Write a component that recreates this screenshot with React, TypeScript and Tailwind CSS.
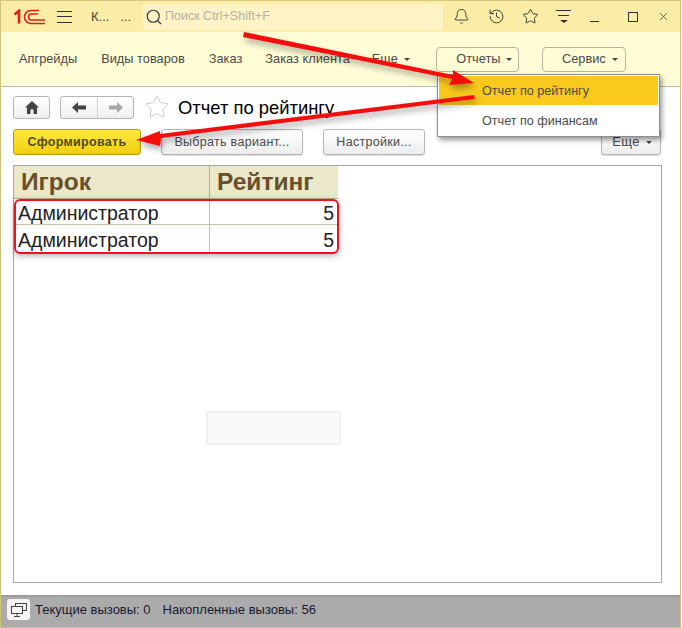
import { Bell, History, Star, X, Search } from 'lucide-react';

const sections = [
  { label: 'Апгрейды', cls: 'ml-[18px]' },
  { label: 'Виды товаров', cls: 'ml-[24px]' },
  { label: 'Заказ', cls: 'ml-[24px]' },
  { label: 'Заказ клиента', cls: 'ml-[23px]' },
];

function Caret() {
  return <span className="ml-[6px] inline-block h-0 w-0 border-x-[3px] border-t-[3px] border-x-transparent border-t-[#444]" />;
}

function Logo() {
  return (
    <svg width="31" height="16" viewBox="0 0 31 16" fill="none" stroke="#e0201b" strokeWidth="1.6">
      <path d="M0.5 5.5 L5 1.8 V14.5" strokeWidth="2.6" />
      <path d="M25 1.5 H17 a6.5 6.5 0 0 0 0 13 H31" />
      <path d="M24 5 H17.5 a3 3 0 0 0 0 6 H31" />
    </svg>
  );
}

function ToolButton({ label, className, caret }: { label: string; className: string; caret?: boolean }) {
  return (
    <div className={`flex h-[26px] items-center justify-center rounded-[3px] border border-[#b5b5b5] bg-gradient-to-b from-white to-[#ededed] text-[12.5px] tracking-[0.3px] text-[#4a4a4a] shadow-[0_1px_1px_rgba(0,0,0,0.15)] ${className}`}>
      {label}
      {caret && <Caret />}
    </div>
  );
}

function Arrows() {
  return (
    <svg className="pointer-events-none absolute left-0 top-0" width="682" height="628">
      <defs>
        <filter id="arrowShadow" x="-10%" y="-30%" width="120%" height="170%">
          <feDropShadow dx="2" dy="4" stdDeviation="3" floodColor="#000" floodOpacity="0.35" />
        </filter>
      </defs>
      <g fill="#f40c0c" filter="url(#arrowShadow)">
        <polygon points="244,32 243,37 452,79 449,85 474,83 453,70 453,75" />
        <polygon points="474,95 475,99 161,138 160,146 136,140 160,131 160,134" />
      </g>
    </svg>
  );
}

export default function App() {
  return (
    <div className="relative flex h-[628px] w-[682px] flex-col overflow-hidden bg-white font-['Liberation_Sans',Arial,sans-serif]">
      <div className="flex h-[628px] w-[681px] flex-col border-x border-b border-[#cfc27a]">
        {/* top bar */}
        <div className="flex h-[32px] shrink-0 items-center border-t border-[#d8ca80] bg-[#fbeda6]">
          <div className="ml-[13px] flex w-[31px] items-center"><Logo /></div>
          <div className="ml-[12px] flex h-[12px] w-[15px] flex-col justify-between">
            <div className="h-[1px] bg-[#333]" />
            <div className="h-[1px] bg-[#333]" />
            <div className="h-[1px] bg-[#333]" />
          </div>
          <div className="ml-[19px] w-[40px] whitespace-pre text-[13px] text-[#444]">К...   ...</div>
          <div className="ml-[12px] flex h-[26px] w-[300px] items-center rounded-[3px] bg-[#fdf3c4]">
            <Search className="ml-[2px] h-[18px] w-[18px] text-[#333]" strokeWidth={1.5} />
            <span className="ml-[2px] text-[12.5px] text-[#b5b0a0]">Поиск Ctrl+Shift+F</span>
          </div>
          <Bell className="ml-[10px] h-[17px] w-[17px] text-[#333]" strokeWidth={1.3} />
          <History className="ml-[18px] h-[17px] w-[17px] text-[#333]" strokeWidth={1.3} />
          <Star className="ml-[17px] h-[17px] w-[17px] text-[#333]" strokeWidth={1.3} />
          <div className="ml-[17px] flex w-[15px] flex-col items-center gap-[4px]">
            <div className="h-[1px] w-[15px] bg-[#333]" />
            <div className="h-[1px] w-[11px] bg-[#333]" />
            <div className="h-0 w-0 border-x-[4px] border-t-[3px] border-x-transparent border-t-[#333]" />
          </div>
          <div className="ml-[19px] mt-[9px] h-[1px] w-[9px] bg-[#333]" />
          <div className="ml-[29px] h-[10px] w-[10px] border border-[#333]" />
          <X className="ml-[19px] h-[13px] w-[13px] text-[#333]" strokeWidth={1.3} />
        </div>

        {/* sections */}
        <div className="flex h-[55px] shrink-0 items-center border-b border-[#b5b5b5] bg-[#fffdd6] text-[12.8px] text-[#4a4a4a]">
          {sections.map((s) => (
            <span key={s.label} className={`${s.cls} whitespace-nowrap`}>{s.label}</span>
          ))}
          <span className="ml-[22px] flex items-center">Еще<Caret /></span>
          <div className="ml-[26px] flex h-[25px] w-[83px] items-center justify-center rounded-[4px] border border-[#b9b59a] pl-[14px]">Отчеты<Caret /></div>
          <div className="ml-[23px] flex h-[25px] w-[84px] items-center justify-center rounded-[4px] border border-[#b9b59a] pl-[12px]">Сервис<Caret /></div>
        </div>

        {/* form */}
        <div className="flex min-h-0 flex-1 flex-col px-[12px] pt-[9px]">
          <div className="flex h-[22px] items-center">
            <div className="flex h-[23px] w-[37px] items-center justify-center rounded-[3px] border border-[#b5b5b5] bg-gradient-to-b from-white to-[#efefef]">
              <svg width="14" height="13" viewBox="0 0 14 13" fill="#444">
                <path d="M7 0 L14 6.5 H12 V13 H8.5 V8.5 H5.5 V13 H2 V6.5 H0 Z" />
              </svg>
            </div>
            <div className="ml-[10px] flex h-[23px] w-[74px] items-center rounded-[3px] border border-[#b5b5b5] bg-gradient-to-b from-white to-[#efefef]">
              <div className="flex h-full w-[37px] items-center justify-center border-r border-[#cfcfcf]">
                <svg width="14" height="11" viewBox="0 0 14 11" fill="#444">
                  <path d="M0 5.5 L6 0 V3.5 H14 V7.5 H6 V11 Z" />
                </svg>
              </div>
              <div className="flex flex-1 items-center justify-center">
                <svg width="14" height="11" viewBox="0 0 14 11" fill="#a8a8a8">
                  <path d="M14 5.5 L8 0 V3.5 H0 V7.5 H8 V11 Z" />
                </svg>
              </div>
            </div>
            <Star className="ml-[10px] h-[26px] w-[26px] text-[#c9c9c9]" strokeWidth={0.9} />
            <span className="ml-[8px] mt-[2px] text-[18.4px] text-black">Отчет по рейтингу</span>
          </div>

          <div className="mt-[11px] flex h-[26px] items-center">
            <div className="flex h-[26px] w-[128px] items-center justify-center rounded-[3px] border border-[#b39b12] bg-gradient-to-b from-[#ffe93c] to-[#f2cf00] text-[12.5px] font-bold tracking-[0.3px] text-[#4f4a20]">
              Сформировать
            </div>
            <ToolButton label="Выбрать вариант..." className="ml-[20px] w-[142px]" />
            <ToolButton label="Настройки..." className="ml-[20px] w-[102px]" />
            <ToolButton label="Еще" caret className="ml-[176px] w-[60px] pl-[2px] text-[13px]" />
          </div>

          {/* report */}
          <div className="relative mt-[10px] h-[418px] w-[649px] border border-[#a5a5a5] bg-white">
            <div className="flex h-[33px] w-[324px] border-b border-[#b8ae92] bg-[#ebe8c9] text-[24.5px] font-bold text-[#6a4f2c]">
              <div className="flex w-[196px] items-center border-r border-[#b8ae92] pl-[7px]">Игрок</div>
              <div className="flex flex-1 items-center pl-[7px]">Рейтинг</div>
            </div>
            <div className="flex h-[26px] w-[324px] border-b border-[#c9c0b0] text-[19.5px] leading-[29px] text-[#222]">
              <div className="w-[196px] border-r border-[#c9c0b0] pl-[4px]">Администратор</div>
              <div className="flex-1 pr-[4px] text-right">5</div>
            </div>
            <div className="flex h-[27px] w-[324px] text-[19.5px] leading-[30px] text-[#222]">
              <div className="w-[196px] border-r border-[#c9c0b0] pl-[4px]">Администратор</div>
              <div className="flex-1 pr-[4px] text-right">5</div>
            </div>
            <div className="absolute left-0 top-[33px] h-[55px] w-[325px] rounded-[6px] border-2 border-[#f01020] shadow-[0_2px_6px_rgba(0,0,0,0.3)]" />
            <div className="absolute left-[192px] top-[245px] h-[34px] w-[135px] border-2 border-[#f1f1f1] bg-[#f9f9f9]" />
          </div>
        </div>

        {/* status */}
        <div className="flex h-[32px] shrink-0 items-center border-t-2 border-[#9c9c9c] bg-[#ababab] pb-[5px] text-[13px] text-[#1a1a33]">
          <div className="ml-[6px] flex h-[21px] w-[23px] items-center justify-center rounded-[3px] bg-[#f4f4f4]">
            <svg width="16" height="15" viewBox="0 0 16 15" fill="none" stroke="#444">
              <rect x="4.5" y="1.5" width="11" height="7" />
              <rect x="0.5" y="4.5" width="11" height="7" fill="#f4f4f4" />
              <path d="M6 11.5 V14 M3 14.5 H9" />
            </svg>
          </div>
          <span className="ml-[5px]">Текущие вызовы: 0</span>
          <span className="ml-[12px]">Накопленные вызовы: 56</span>
        </div>
      </div>

      {/* dropdown */}
      <div className="absolute left-[437px] top-[74px] h-[63px] w-[223px] border border-[#8f8f8f] bg-white p-[1px] text-[12.6px] text-[#4a4a4a] shadow-[2px_3px_5px_rgba(0,0,0,0.4)]">
        <div className="flex h-[29px] items-center bg-[#f9c91c] pl-[43px] pt-[1px]">Отчет по рейтингу</div>
        <div className="flex h-[30px] items-center pl-[43px] pt-[2px]">Отчет по финансам</div>
      </div>

      <Arrows />
    </div>
  );
}
